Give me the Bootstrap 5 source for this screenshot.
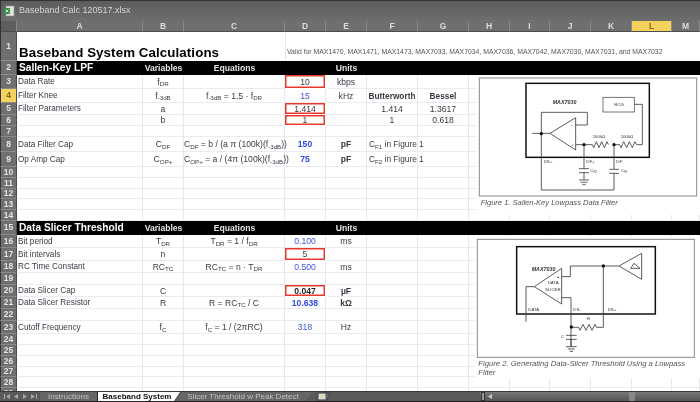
<!DOCTYPE html>
<html lang="en">
<head>
    <meta charset="utf-8">
    <meta name="viewport" content="width=device-width, initial-scale=1.0">
    <title>Baseband Calc 120517.xlsx</title>
    <link rel="stylesheet" href="https://cdn.jsdelivr.net/npm/bootstrap@5.3.0/dist/css/bootstrap.min.css">
    <style>
        body { background: #333; margin: 0; overflow: hidden; }
        .xl-window { width: 700px; height: 402px; font-family: "Liberation Sans", Arial, sans-serif; color: #3c3844; background: #fff; filter: blur(.45px); overflow: hidden; }
        .xl-title { height: 21px; background: linear-gradient(#5c5c5c, #6e6e6e); border-top: 1px solid #333; border-left: 1px solid #333; color: #d4d4d4; font-size: 9px; padding-left: 3px; flex: none; }
        .xl-sheet { flex: 1 1 auto; min-height: 0; overflow: hidden; }
        .xl-grid { table-layout: fixed; width: 700px; border-collapse: separate; border-spacing: 0; font-size: 8.6px; line-height: 1; }
        .xl-grid td, .xl-grid th { padding: 0; white-space: nowrap; box-sizing: border-box; }
        .xl-grid td { border-right: 1px solid #e6e9eb; border-bottom: 1px solid #e9ebed; text-align: center; vertical-align: middle; padding-top: 1px; }
        .xl-grid td.lbl { text-align: left; padding-left: 1px; padding-top: 2px; font-size: 8.2px; }
        .xl-grid td.fig-note { text-align: left; padding-left: 2px; font-size: 8.3px; }
        .xl-grid thead th { height: 11px; background: #6f6f6f; color: #dcdcdc; font-weight: 700; font-size: 8.5px; text-align: center; border-right: 1px solid #8a8a8a; border-bottom: 1px solid #4c4c4c; }
        .xl-grid thead th.corner { background: #5e5e5e; border-left: 1px solid #333; }
        .xl-grid thead th.on { background: #f5d25e; color: #7a6a20; }
        .xl-grid tbody th { background: #6f6f6f; color: #e4e4e4; font-weight: 700; font-size: 8.5px; text-align: center; border-left: 1px solid #333; border-right: 1px solid #4c4c4c; border-bottom: 1px solid #8a8a8a; }
        .xl-grid tbody th.on { background: #f5d25e; color: #7a6a20; }
        .xl-grid td.open { border: 0; vertical-align: bottom; text-align: left; }
        .xl-grid td.open.edge { border-left: 1px solid #e6e9eb; }
        .xl-grid td.xl-head { font-size: 13.3px; font-weight: 700; color: #000; padding-left: 2px; padding-bottom: 2px; letter-spacing: .1px; }
        .xl-grid td.xl-valid { font-size: 6.86px; color: #56525c; padding-left: 1px; padding-bottom: 5px; }
        .xl-grid td.black { background: #000; color: #e4e4e4; border: 0; font-weight: 700; padding-top: 0; }
        .xl-grid td.black.lbl { color: #fff; font-size: 10.2px; padding-left: 2px; padding-top: 0; }
        .xl-grid td.redbox { box-shadow: inset 0 0 0 1.5px #e8392f; border-color: transparent; }
        .val { color: #3f57e0; }
        .val-b { color: #2c48e4; font-weight: 700; }
        .strong-b { color: #222; font-weight: 700; }
        .mini { font-size: 6.2px; }
        .small-head { font-size: 8.3px; font-weight: 700; }
        .xl-fig { position: absolute; display: block; }
        .fig-one { left: 465px; top: 70px; }
        .fig-two { left: 465px; top: 230px; }
        .xl-fig text { font-family: "Liberation Sans", Arial, sans-serif; fill: #333; }
        .xl-fig .cap { font-style: italic; fill: #55525a; }
        .xl-fig .cap-one { font-size: 22.7px; }
        .xl-fig .cap-two { font-size: 23px; }
        .xl-fig .tiny { font-size: 13px; }
        .xl-fig .brand { font-size: 16px; font-style: italic; font-weight: 700; }
        .xl-fig .wire { fill: none; stroke: #333; stroke-width: 2.4; }
        .xl-fig .thick { fill: none; stroke: #111; stroke-width: 4.5; }
        .xl-fig .frame { fill: #fff; stroke: #8a8a8a; stroke-width: 3; }
        .xl-tabs { height: 11px; background: #5a5a5a; border-top: 1px solid #3a3a3a; border-bottom: 1px solid #222; flex: none; font-size: 8px; line-height: 10px; }
        .tab-nav { width: 38px; padding-left: 3px; flex: none; }
        .tab-item { color: #c0c0c0; background: #666; text-align: center; flex: none; overflow: hidden; }
        .tab-first { width: 58px; margin-left: 2px; border-right: 1px solid #222; }
        .tab-active { width: 82px; background: #fff; color: #111; font-weight: 700; padding-right: 4px; clip-path: polygon(0 0, 100% 0, calc(100% - 6px) 100%, 0 100%); }
        .tab-last { width: 136px; margin-left: -4px; padding-right: 2px; clip-path: polygon(6px 0, 100% 0, calc(100% - 6px) 100%, 0 100%); }
        .tab-new { margin-left: 1px; flex: none; }
        .tab-scroll { width: 220px; background: linear-gradient(#777, #555); margin-left: auto; flex: none; }
        .scroll-split { width: 4px; margin-left: 1px; background: #999; border: 1px solid #333; flex: none; }
        .scroll-thumb { width: 6px; margin-left: 134px; background: #8a8a8a; flex: none; }
    </style>
</head>
<body>

<div class="xl-window position-relative d-flex flex-column">
    <div class="xl-title d-flex align-items-center gap-1">
        <svg width="11" height="12" viewBox="0 0 11 12">
            <rect x="2" y="1" width="8" height="10" fill="#d9e6d9" stroke="#999" stroke-width=".6"/>
            <rect x="0" y="3" width="6" height="6" rx="1" fill="#2f8a45"/>
            <path d="M1.5 4.5l3 3m0-3l-3 3" stroke="#fff" stroke-width=".8"/>
        </svg>
        <span>Baseband Calc 120517.xlsx</span>
    </div>

    <div class="xl-sheet">
        <table class="xl-grid">
            <colgroup id="cols"></colgroup>
            <thead><tr id="colHead"></tr></thead>
            <tbody id="rows"></tbody>
        </table>
    </div>

    <div class="xl-tabs d-flex">
        <div class="tab-nav">
            <svg width="34" height="9" viewBox="0 0 34 9" fill="#a8a8a8">
                <path d="M1 2v5h1V2zM7 2L3 4.5 7 7zM15 2l-4 2.5L15 7zM20 2v5l4-2.5zM28 2v5l4-2.5zM33 2v5h1V2z"/>
            </svg>
        </div>
        <div class="tab-item tab-first">Instructions</div>
        <div class="tab-item tab-active">Baseband System</div>
        <div class="tab-item tab-last">Slicer Threshold w Peak Detect</div>
        <svg class="tab-new" width="18" height="9" viewBox="0 0 18 9">
            <path d="M3 8L6 1H17L14 8Z" fill="#666" stroke="#333" stroke-width=".6"/>
            <rect x="6" y="2" width="6" height="5" fill="#d8d8b8" stroke="#eee" stroke-width=".6"/>
        </svg>
        <div class="tab-scroll d-flex">
            <div class="scroll-split"></div>
            <svg width="10" height="9" viewBox="0 0 10 9" fill="#ccc"><path d="M7 2L3 4.5 7 7z"/></svg>
            <div class="scroll-thumb"></div>
        </div>
    </div>

    <!-- figure 1, drawn in 3x coords of the crop at 465,70 -->
    <svg class="xl-fig fig-one" width="235" height="150" viewBox="0 0 705 450">
        <rect x="34" y="16" width="671" height="418" fill="#fff"/>
        <rect class="frame" x="43" y="24" width="652" height="354"/>
        <rect class="thick" x="183" y="40" width="370" height="222"/>
        <text class="brand" x="263" y="101">MAX7030</text>
        <rect x="414" y="82" width="94" height="44" fill="none" stroke="#555" stroke-width="2.4"/>
        <text class="tiny" x="448" y="109">RCG</text>
        <path class="wire" d="M508 103H532V224H515l-5-9-8 18-9-18-8 18-9-18-8 18-4-9H447M430 224l-4-9-8 18-8-18-8 18-8-18-8 18-4-9H332"/>
        <path class="wire" d="M255 190L332 143V240ZM202 190H255M229 360V127H367V165H332M357 224V296M342 296H372M342 308H372M357 308V330M342 330H372M347 337H367M352 344H362"/>
        <path class="wire" d="M447 224V298M433 298H462M433 310H462M447 310V360H229"/>
        <circle cx="229" cy="191" r="5" fill="#111"/>
        <circle cx="357" cy="224" r="5" fill="#111"/>
        <circle cx="447" cy="224" r="5" fill="#111"/>
        <text class="tiny" x="318" y="168">-</text>
        <text class="tiny" x="318" y="228">+</text>
        <text class="tiny" x="383" y="204">100k&#937;</text>
        <text class="tiny" x="467" y="204">100k&#937;</text>
        <text class="tiny" x="236" y="280">DS+</text>
        <text class="tiny" x="364" y="280">DF+</text>
        <text class="tiny" x="454" y="280">DF</text>
        <text class="tiny" x="376" y="306">C<tspan font-size="9" dy="3">F2</tspan></text>
        <text class="tiny" x="468" y="306">C<tspan font-size="9" dy="3">F1</tspan></text>
        <text class="cap cap-one" x="47" y="404">Figure 1. Sallen-Key Lowpass Data Filter</text>
    </svg>

    <!-- figure 2, crop at 465,230 -->
    <svg class="xl-fig fig-two" width="235" height="172" viewBox="0 0 705 516">
        <rect x="30" y="20" width="675" height="425" fill="#fff"/>
        <rect class="frame" x="37" y="28" width="651" height="354"/>
        <rect class="thick" x="155" y="50" width="416" height="202"/>
        <text class="brand" x="200" y="122">MAX7030</text>
        <path class="wire" d="M208 170L290 115V222ZM208 170H183V275M290 140H316V108H462M462 108L530 70V148ZM497 115L507 100L525 115ZM415 108V292H395l-5-9-9 18-9-18-9 18-9-18-9 18-4-9H318M290 203H318V350M303 316H335M303 328H335M318 328V350M303 350H335M309 357H329M314 364H324"/>
        <circle cx="415" cy="108" r="5" fill="#111"/>
        <circle cx="319" cy="291" r="5" fill="#111"/>
        <text class="tiny" x="248" y="163">DATA</text>
        <text class="tiny" x="240" y="183">SLICER</text>
        <text class="tiny" x="275" y="145" font-weight="700">+</text>
        <text class="tiny" x="276" y="207" font-weight="700">-</text>
        <text class="tiny" x="190" y="244">DATA</text>
        <text class="tiny" x="325" y="244">DS-</text>
        <text class="tiny" x="428" y="244">DS+</text>
        <text class="tiny" x="366" y="270">R</text>
        <text class="tiny" x="288" y="323">C</text>
        <text class="cap cap-two" x="40" y="409">Figure 2. Generating Data-Slicer Threshold Using a Lowpass</text>
        <text class="cap cap-two" x="40" y="436">Filter</text>
    </svg>
</div>

<script src="https://cdn.jsdelivr.net/npm/bootstrap@5.3.0/dist/js/bootstrap.bundle.min.js"></script>
<script>
    const letters = ["", "A", "B", "C", "D", "E", "F", "G", "H", "I", "J", "K", "L", "M"];
    const widths = [17, 126, 41, 101, 41, 41, 51, 51, 41, 40, 41, 41, 40, 28];
    const heights = [29, 14, 14, 14, 12, 11, 11, 15, 15, 11, 11, 10, 11, 11, 14, 13, 13, 12, 12, 12, 12, 12, 13, 11, 11, 11, 10, 11, 11];

    const s = (t) => `<sub class="mini">${t}</sub>`;
    const black = (title) => ({ black: title });

    // row number -> { column index -> [html, extra class] }
    const cells = {
        3: { 1: ["Data Rate", "lbl"], 2: ["f" + s("DR")], 4: ["10", "redbox"], 5: ["kbps"] },
        4: { 1: ["Filter Knee", "lbl"], 2: ["f" + s("-3dB")], 3: ["f" + s("-3dB") + " = 1.5 &middot; f" + s("DR")], 4: ["<span class='val'>15</span>"], 5: ["kHz"], 6: ["<span class='small-head'>Butterworth</span>"], 7: ["<span class='small-head'>Bessel</span>"] },
        5: { 1: ["Filter Parameters", "lbl"], 2: ["a"], 4: ["1.414", "redbox"], 6: ["1.414"], 7: ["1.3617"] },
        6: { 2: ["b"], 4: ["1", "redbox"], 6: ["1"], 7: ["0.618"] },
        8: { 1: ["Data Filter Cap", "lbl"], 2: ["C" + s("DF")], 3: ["C" + s("DF") + " = b / (a &pi; (100k)(f" + s("-3dB") + "))"], 4: ["<span class='val-b'>150</span>"], 5: ["<b>pF</b>"], 6: ["C" + s("F1") + " in Figure 1", "fig-note"] },
        9: { 1: ["Op Amp Cap", "lbl"], 2: ["C" + s("OP+")], 3: ["C" + s("OP+") + " = a / (4&pi; (100k)(f" + s("-3dB") + "))"], 4: ["<span class='val-b'>75</span>"], 5: ["<b>pF</b>"], 6: ["C" + s("F2") + " in Figure 1", "fig-note"] },
        16: { 1: ["Bit period", "lbl"], 2: ["T" + s("DR")], 3: ["T" + s("DR") + " = 1 / f" + s("DR")], 4: ["<span class='val'>0.100</span>"], 5: ["ms"] },
        17: { 1: ["Bit intervals", "lbl"], 2: ["n"], 4: ["5", "redbox"] },
        18: { 1: ["RC Time Constant", "lbl"], 2: ["RC" + s("TC")], 3: ["RC" + s("TC") + " = n &middot; T" + s("DR")], 4: ["<span class='val'>0.500</span>"], 5: ["ms"] },
        20: { 1: ["Data Slicer Cap", "lbl"], 2: ["C"], 4: ["<span class='strong-b'>0.047</span>", "redbox"], 5: ["<b>&micro;F</b>"] },
        21: { 1: ["Data Slicer Resistor", "lbl"], 2: ["R"], 3: ["R = RC" + s("TC") + " / C"], 4: ["<span class='val-b'>10.638</span>"], 5: ["<b>k&Omega;</b>"] },
        23: { 1: ["Cutoff Frequency", "lbl"], 2: ["f" + s("C")], 3: ["f" + s("C") + " = 1 / (2&pi;RC)"], 4: ["<span class='val'>318</span>"], 5: ["Hz"] },
        2: black("Sallen-Key LPF"),
        15: black("Data Slicer Threshold")
    };

    document.getElementById("cols").innerHTML = widths.map(w => `<col style="width:${w}px">`).join("");
    document.getElementById("colHead").innerHTML = letters.map((l, i) =>
        `<th class="${i === 0 ? "corner" : ""}${l === "L" ? "on" : ""}">${l}</th>`).join("");

    let html = "";
    heights.forEach((h, i) => {
        const n = i + 1;
        const row = cells[n] || {};
        html += `<tr style="height:${h}px"><th class="${n === 4 ? "on" : ""}">${n}</th>`;
        if (n === 1) {
            html += `<td class="open xl-head" colspan="3">Baseband System Calculations</td>`;
            html += `<td class="open edge xl-valid" colspan="10">Valid for MAX1470, MAX1471, MAX1473, MAX7033, MAX7034, MAX7036, MAX7042, MAX7030, MAX7031, and MAX7032</td>`;
        } else if (row.black) {
            html += `<td class="black lbl">${row.black}</td><td class="black">Variables</td><td class="black">Equations</td><td class="black"></td><td class="black">Units</td><td class="black" colspan="8"></td>`;
        } else {
            for (let c = 1; c < letters.length; c++) {
                const cell = row[c] || ["", ""];
                html += `<td class="${cell[1] || ""}">${cell[0]}</td>`;
            }
        }
        html += "</tr>";
    });
    document.getElementById("rows").innerHTML = html;
</script>
</body>
</html>
